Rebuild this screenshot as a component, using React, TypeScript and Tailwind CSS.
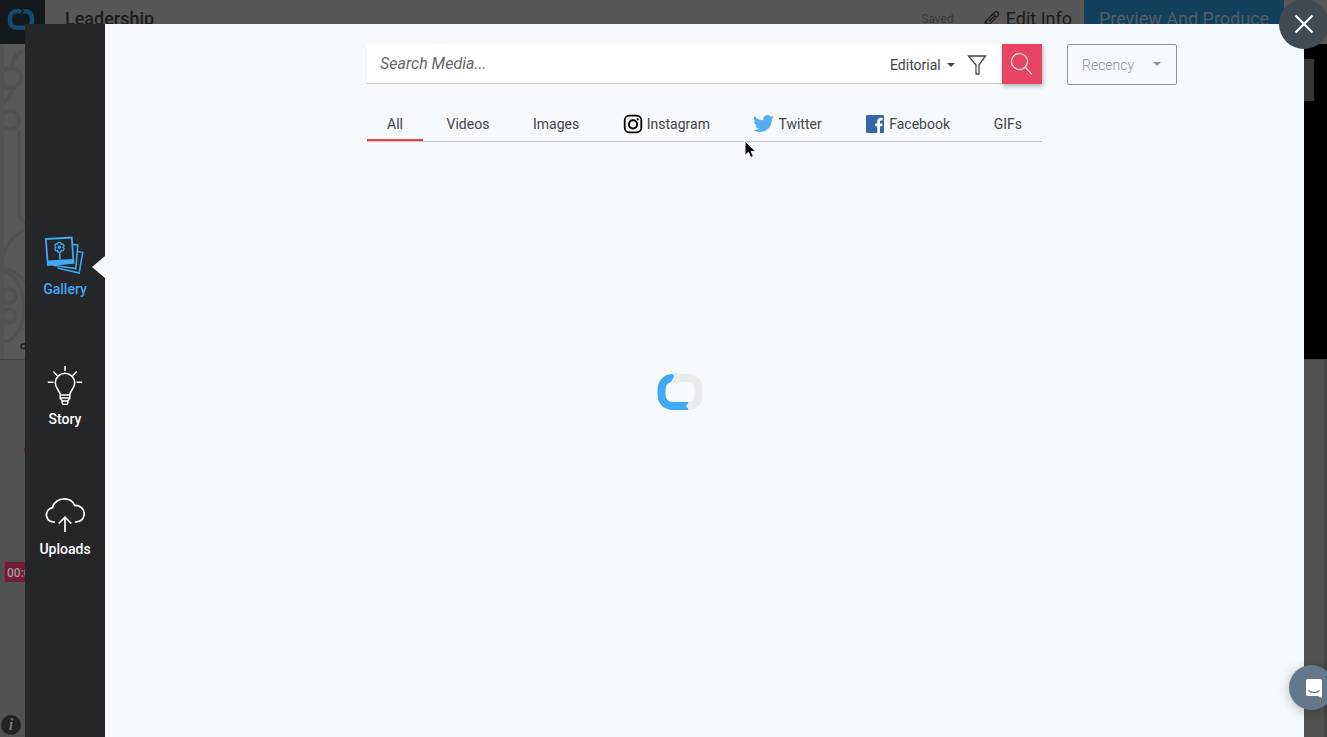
import { useState } from "react";

const sections = [
  { id: "gallery", label: "Gallery", icon: GalleryIcon },
  { id: "story", label: "Story", icon: BulbIcon },
  { id: "uploads", label: "Uploads", icon: CloudIcon },
];

const tabs = [
  { id: "all", label: "All" },
  { id: "videos", label: "Videos" },
  { id: "images", label: "Images" },
  { id: "instagram", label: "Instagram", icon: InstagramIcon },
  { id: "twitter", label: "Twitter", icon: TwitterIcon },
  { id: "facebook", label: "Facebook", icon: FacebookIcon },
  { id: "gifs", label: "GIFs" },
];

function GalleryIcon() {
  return (
    <svg className="w-10 h-10" viewBox="0 0 40 40" fill="none" stroke="currentColor" strokeWidth="1.6">
      <path d="M28 9.500 32.800 10 30.800 33.500 8 30.300" />
      <path d="M32.500 16.500 37.700 17.300 34.200 38 12.500 33" />
      <path d="M.8 4 26.800 2.500 28.500 28 2.800 30Z" strokeWidth="1.800" />
      <path d="M2.300 25.500 28.400 24 28.700 28.200 2.800 30.200Z" fill="currentColor" stroke="none" />
      <path d="M14.600 17 15 24.500" />
      <circle cx="14.300" cy="12.300" r="1" />
      <path d="M14.300 7.300c1.300 0 2 .9 2 1.900 1-.5 2.200 0 2.600 1 .4 1-.1 1.800-.9 2.300.9.500 1.200 1.500.7 2.400-.5.900-1.500 1.100-2.400.7 0 1-.9 1.800-1.900 1.800s-1.900-.8-1.900-1.800c-.9.400-1.900.2-2.400-.7-.5-.9-.2-1.900.7-2.400-.8-.5-1.200-1.300-.8-2.300.4-1 1.500-1.500 2.500-1 0-1 .6-1.900 1.800-1.900Z" strokeWidth="1.300" />
    </svg>
  );
}

function BulbIcon() {
  return (
    <svg className="w-10 h-10" viewBox="0 0 40 40" fill="none" stroke="currentColor" strokeWidth="1.500">
      <path d="M20 1v5M8.300 6.500l4.200 4.200M31.700 6.500l-4.200 4.200M2.800 17.300h5.700M31.500 17.300h5.700" />
      <path d="M15.200 30c0-4.200-4.900-6.300-4.900-12a9.700 9.700 0 0 1 19.400 0c0 5.700-4.900 7.800-4.900 12Z" />
      <path d="M15.200 30v3.500l1.800 2v2l1 2h4l1-2v-2l1.800-2V30M15.200 33h9.600M17 36h6" strokeWidth="1.400" />
    </svg>
  );
}

function CloudIcon() {
  return (
    <svg className="w-10 h-10" viewBox="0 0 40 40" fill="none" stroke="currentColor" strokeWidth="1.700">
      <path d="M10 27H8a7.200 7.200 0 0 1-.5-14.300C8.600 7.300 13.500 3.800 19.500 3.800c5 0 8.500 2.600 10.200 6.700 5.200-.4 9.500 3.500 9.500 8.300 0 4.500-3.400 8.200-8.200 8.200h-1.200" />
      <path d="M20 37V22M13.700 28.500 20 22.200l6.300 6.300" />
    </svg>
  );
}

function InstagramIcon() {
  return (
    <svg className="w-5 h-5 text-black" viewBox="0 0 20 20" fill="none" stroke="currentColor" strokeWidth="2">
      <rect x="1.700" y="1.700" width="16.600" height="16.600" rx="4.500" strokeWidth="1.800" />
      <circle cx="10" cy="10.300" r="4.100" />
      <circle cx="14.700" cy="5.400" r="1.100" fill="currentColor" stroke="none" />
    </svg>
  );
}

function TwitterIcon() {
  return (
    <svg className="w-[21px] h-5 text-[#55acee]" viewBox="0 1 24 23" fill="currentColor">
      <path d="M23.950 4.570a10 10 0 0 1-2.820.770 4.960 4.960 0 0 0 2.160-2.720c-.950.550-2 .950-3.130 1.180a4.920 4.920 0 0 0-8.380 4.480A13.930 13.930 0 0 1 1.640 3.160a4.920 4.920 0 0 0 1.520 6.570 4.900 4.900 0 0 1-2.230-.610v.060a4.920 4.920 0 0 0 3.950 4.830 5 5 0 0 1-2.210.080 4.940 4.940 0 0 0 4.600 3.420A9.870 9.870 0 0 1 0 19.540a13.990 13.990 0 0 0 7.550 2.210c9.050 0 14-7.500 14-13.990 0-.210 0-.420-.020-.630a9.940 9.940 0 0 0 2.420-2.560Z" />
    </svg>
  );
}

function FacebookIcon() {
  return (
    <svg className="w-5 h-5" viewBox="0 0 20 20">
      <rect x="1" y="1" width="18" height="18" rx="1" fill="#3764a6" />
      <path d="M12.300 19v-6.800h-2.100V9.400h2.100V7.300c0-2.300 1.400-3.500 3.500-3.500.8 0 1.400 0 1.800.1v2.500h-1.300c-1 0-1.300.5-1.300 1.300v1.700h2.500l-.4 2.800H15V19Z" fill="#fff" />
    </svg>
  );
}

function Caret({ className }: { className: string }) {
  return (
    <svg className={className} viewBox="0 0 8 4" fill="currentColor">
      <path d="M0 0h8L4 4Z" />
    </svg>
  );
}

function Logo() {
  return (
    <svg className="w-7 h-6 text-[#154b6d]" viewBox="0 0 28 24" fill="none" stroke="currentColor" strokeWidth="4.500">
      <path d="M12.500 3.200H9.500a6.500 6.500 0 0 0-6.500 6.500v3.600a6.500 6.500 0 0 0 6.500 6.500h9a6.500 6.500 0 0 0 6.500-6.500v-3.600a6.500 6.500 0 0 0-6.500-6.500H12" />
      <path d="m12.500 0 3.800 3-2.600 3.800" stroke="#14191c" strokeWidth="1.500" />
    </svg>
  );
}

// Dimmed project page that stays visible round the dialog
function EditorBackdrop() {
  return (
    <div aria-hidden="true" className="flex flex-col h-full bg-[#515151]">
      <header className="flex h-11 shrink-0 bg-[#575757] text-[#1c1c1c]">
        <div className="flex w-[45px] justify-center pt-2 pr-1 bg-[#14191c]">
          <Logo />
        </div>
        <div className="flex flex-1 items-center pb-1.5 pl-5">
          <span className="flex-1 text-lg leading-5 font-medium">Leadership</span>
          <span className="mr-7 text-xs text-[#3b3b3b]">Saved</span>
          <svg className="w-5 h-5 mr-1" viewBox="0 0 20 20" fill="none" stroke="currentColor" strokeWidth="1.200">
            <path d="m2.500 17.500 1-5 9-9c1-1 2.300-1 3.300 0s1 2.400 0 3.400l-9 9ZM3.500 12.500l3.300 3.400M11 5l3.500 3.300M7 12.500l6-6" />
          </svg>
          <span className="mr-3 text-lg leading-5">Edit Info</span>
        </div>
        <div className="flex w-[200px] items-center justify-center pb-1.5 bg-[#123f5c] text-[#555c62]">
          <span className="whitespace-nowrap text-lg leading-5">Preview And Produce</span>
        </div>
        <div className="w-[43px]" />
      </header>
      <div className="flex h-[316px] shrink-0 justify-between border-b border-[#434343] bg-[#595959]">
        <svg className="h-full w-[30px] border-l-4 border-[#545454]" viewBox="4 44 26 315" fill="none" stroke="#525252" strokeWidth="4">
          <path d="M27 50c-9 1-14 8-15 16" />
          <circle cx="11" cy="78" r="10" />
          <path d="M12 88c0 8-4 12-8 14" />
          <circle cx="10" cy="120" r="9" />
          <path d="M19 130v86l8 9M4 254c3-11 10-20 23-25M4 269c9 0 18 7 23 17" strokeWidth="3" />
          <circle cx="9" cy="296" r="7" />
          <circle cx="9" cy="316" r="7" />
          <path d="M4 272c25 5 28 65 0 70" strokeWidth="3" />
          <path d="M27 344h-3.500c-3.500 0-3.500 4.500 0 4.500H27" stroke="#1e1e1e" strokeWidth="1.300" />
        </svg>
        <div className="w-[23px] pt-[15px] bg-black">
          <div className="h-[42px] w-[10px] bg-[#363636]" />
        </div>
      </div>
      <div className="flex flex-1 flex-col justify-between border-r-3 border-[#484848]">
        <div>
          <div className="mt-[86px] ml-6 h-2 w-2 rounded-full bg-[#711d38]" />
          <div className="mt-[108px] ml-1 h-5 w-10 rounded-xs border-l border-[#8e2a4a] bg-[#711d38] pl-[2px] text-xs leading-[22px] font-medium text-[#999]">
            00:00
          </div>
        </div>
        <div className="mb-[2px] ml-px flex h-5 w-5 items-center justify-center rounded-full bg-[#222] font-['Liberation_Serif',serif] text-base font-bold italic text-[#777]">
          i
        </div>
      </div>
    </div>
  );
}

export default function App() {
  const [section, setSection] = useState("gallery");
  const [tab, setTab] = useState("all");
  const [query, setQuery] = useState("");

  return (
    <div className="relative h-screen overflow-hidden font-['Roboto',sans-serif]">
      <EditorBackdrop />

      {/* Media dialog */}
      <div role="dialog" aria-label="Media" className="absolute top-6 right-[23px] bottom-0 left-[25px] flex">
        <nav className="flex w-20 shrink-0 flex-col justify-center bg-[#242628] pt-8">
          {sections.map((s) => {
            const Icon = s.icon;
            const active = s.id === section;
            return (
              <button
                key={s.id}
                type="button"
                onClick={() => setSection(s.id)}
                className={`relative flex h-[130px] flex-col items-center justify-center gap-1 text-sm leading-5 font-medium ${
                  active ? "text-[#3fa9f5]" : "text-white"
                }`}
              >
                <Icon />
                {s.label}
                {active && (
                  <svg className="absolute top-[54px] right-0 h-[22px] w-[13px]" viewBox="0 0 13 22">
                    <path d="M13 0v22L0 11Z" fill="#f5f9fc" />
                  </svg>
                )}
              </button>
            );
          })}
        </nav>

        <main className="flex min-w-0 flex-1 flex-col bg-[#f5f9fc] pt-5 text-[#444]">
          <div className="grid grid-cols-[1fr_675px_1fr]">
            <form
              onSubmit={(e) => e.preventDefault()}
              className="col-start-2 flex h-10 items-center border-b border-[#c4c6c8] bg-white"
            >
              <input
                type="text"
                aria-label="Search Media"
                placeholder="Search Media..."
                value={query}
                onChange={(e) => setQuery(e.target.value)}
                className="h-full min-w-0 flex-1 px-[13px] text-base italic outline-none placeholder:text-[#666]"
              />
              <div className="relative mr-3 flex items-center pt-0.5">
                <select aria-label="Media type" className="appearance-none pr-3.5 text-sm outline-none">
                  <option>Editorial</option>
                  <option>Creative</option>
                </select>
                <Caret className="pointer-events-none absolute right-0 h-1 w-2" />
              </div>
              <button type="button" aria-label="Filter" className="mr-[15px] pt-0.5">
                <svg className="h-5 w-5" viewBox="0 0 20 20" fill="none" stroke="currentColor" strokeWidth="1.300">
                  <path d="M1.500 1h17l-6.500 9v9H9v-9Z" />
                </svg>
              </button>
              <button
                type="submit"
                aria-label="Search"
                className="-mb-px flex h-10 w-10 items-center justify-center bg-[#e94363] text-white shadow-[1px_2px_4px_rgba(0,0,0,0.3)]"
              >
                <svg className="h-6 w-6" viewBox="0 0 24 24" fill="none" stroke="currentColor" strokeWidth="1.100">
                  <circle cx="9.500" cy="9.500" r="8" />
                  <path d="m15.200 15.200 6.800 7.300" />
                </svg>
              </button>
            </form>
            <div className="relative ml-[25px] flex w-[110px] items-center text-[#8d9298]">
              <select
                aria-label="Sort by"
                className="-mb-px h-[41px] w-full appearance-none rounded-xs border border-[#8d9399] pl-[14px] text-sm font-light outline-none"
              >
                <option>Recency</option>
                <option>Relevance</option>
              </select>
              <Caret className="pointer-events-none absolute right-4 h-1 w-2" />
            </div>

            <div role="tablist" className="relative col-start-2 mt-[23px] flex h-[35px] justify-between border-b border-[#c4c6c8]">
              {tabs.map((t) => {
                const Icon = t.icon;
                return (
                  <button
                    key={t.id}
                    type="button"
                    role="tab"
                    aria-selected={t.id === tab}
                    onClick={() => setTab(t.id)}
                    className={`flex items-center gap-1 border-b-2 px-5 pt-0.5 text-sm ${
                      t.id === tab ? "border-[#e8414f]" : "border-transparent"
                    }`}
                  >
                    {Icon && <Icon />}
                    {t.label}
                  </button>
                );
              })}
              {/* Mouse pointer */}
              <svg className="pointer-events-none absolute top-[33px] left-[377px] h-[19px] w-[13px]" viewBox="0 0 13 19">
                <path d="M1 1v14.500l3.400-3.200 2.300 5.200 2.700-1.200-2.300-5h4.600Z" fill="#000" stroke="#fff" />
              </svg>
            </div>
          </div>

          {/* Loading spinner */}
          <div role="status" aria-label="Loading" className="flex flex-1 items-center justify-center pr-[49px] pb-24">
            <svg className="h-10 w-12" viewBox="0 0 48 40" fill="none" strokeWidth="8">
              <path d="M15 6h17.500a10 10 0 0 1 10 10v8.500a10 10 0 0 1-9.500 9.500" stroke="#e9ebeb" />
              <path d="M18 6h-1.500a11 11 0 0 0-11 11v6c0 6 4.500 11 11 11h16" stroke="#41a8f2" />
              <path d="M14 11.500 18.500 4 15 1h7v10.500Z" fill="#e9ebeb" stroke="none" />
              <path d="M33 30 30 34l3 4h3.500v-8Z" fill="#e9ebeb" stroke="none" />
            </svg>
          </div>
        </main>
      </div>

      <button
        type="button"
        aria-label="Close"
        className="absolute -top-px -right-0.5 flex h-[50px] w-[50px] items-center justify-center rounded-full bg-[#414b54] text-white"
      >
        <svg className="h-5 w-5" viewBox="0 0 20 20" fill="none" stroke="currentColor" strokeWidth="2">
          <path d="m1.500 1.500 17 17M18.500 1.500l-17 17" />
        </svg>
      </button>

      <button
        type="button"
        aria-label="Open chat"
        className="absolute right-[-7px] bottom-[27px] flex h-[45px] w-[45px] items-center justify-center rounded-full bg-[#64788c] pl-1 shadow-[0_2px_12px_rgba(0,0,0,0.25)]"
      >
        <svg className="h-5 w-5" viewBox="0 0 20 20" fill="none">
          <path d="M4 1h12a2 2 0 0 1 2 2v17l-4-2H4a2 2 0 0 1-2-2V3a2 2 0 0 1 2-2Z" fill="#fff" />
          <path d="M4.500 12.500c3 2.800 8 2.800 11 0" stroke="#64788c" strokeWidth="1.200" />
        </svg>
      </button>
    </div>
  );
}
